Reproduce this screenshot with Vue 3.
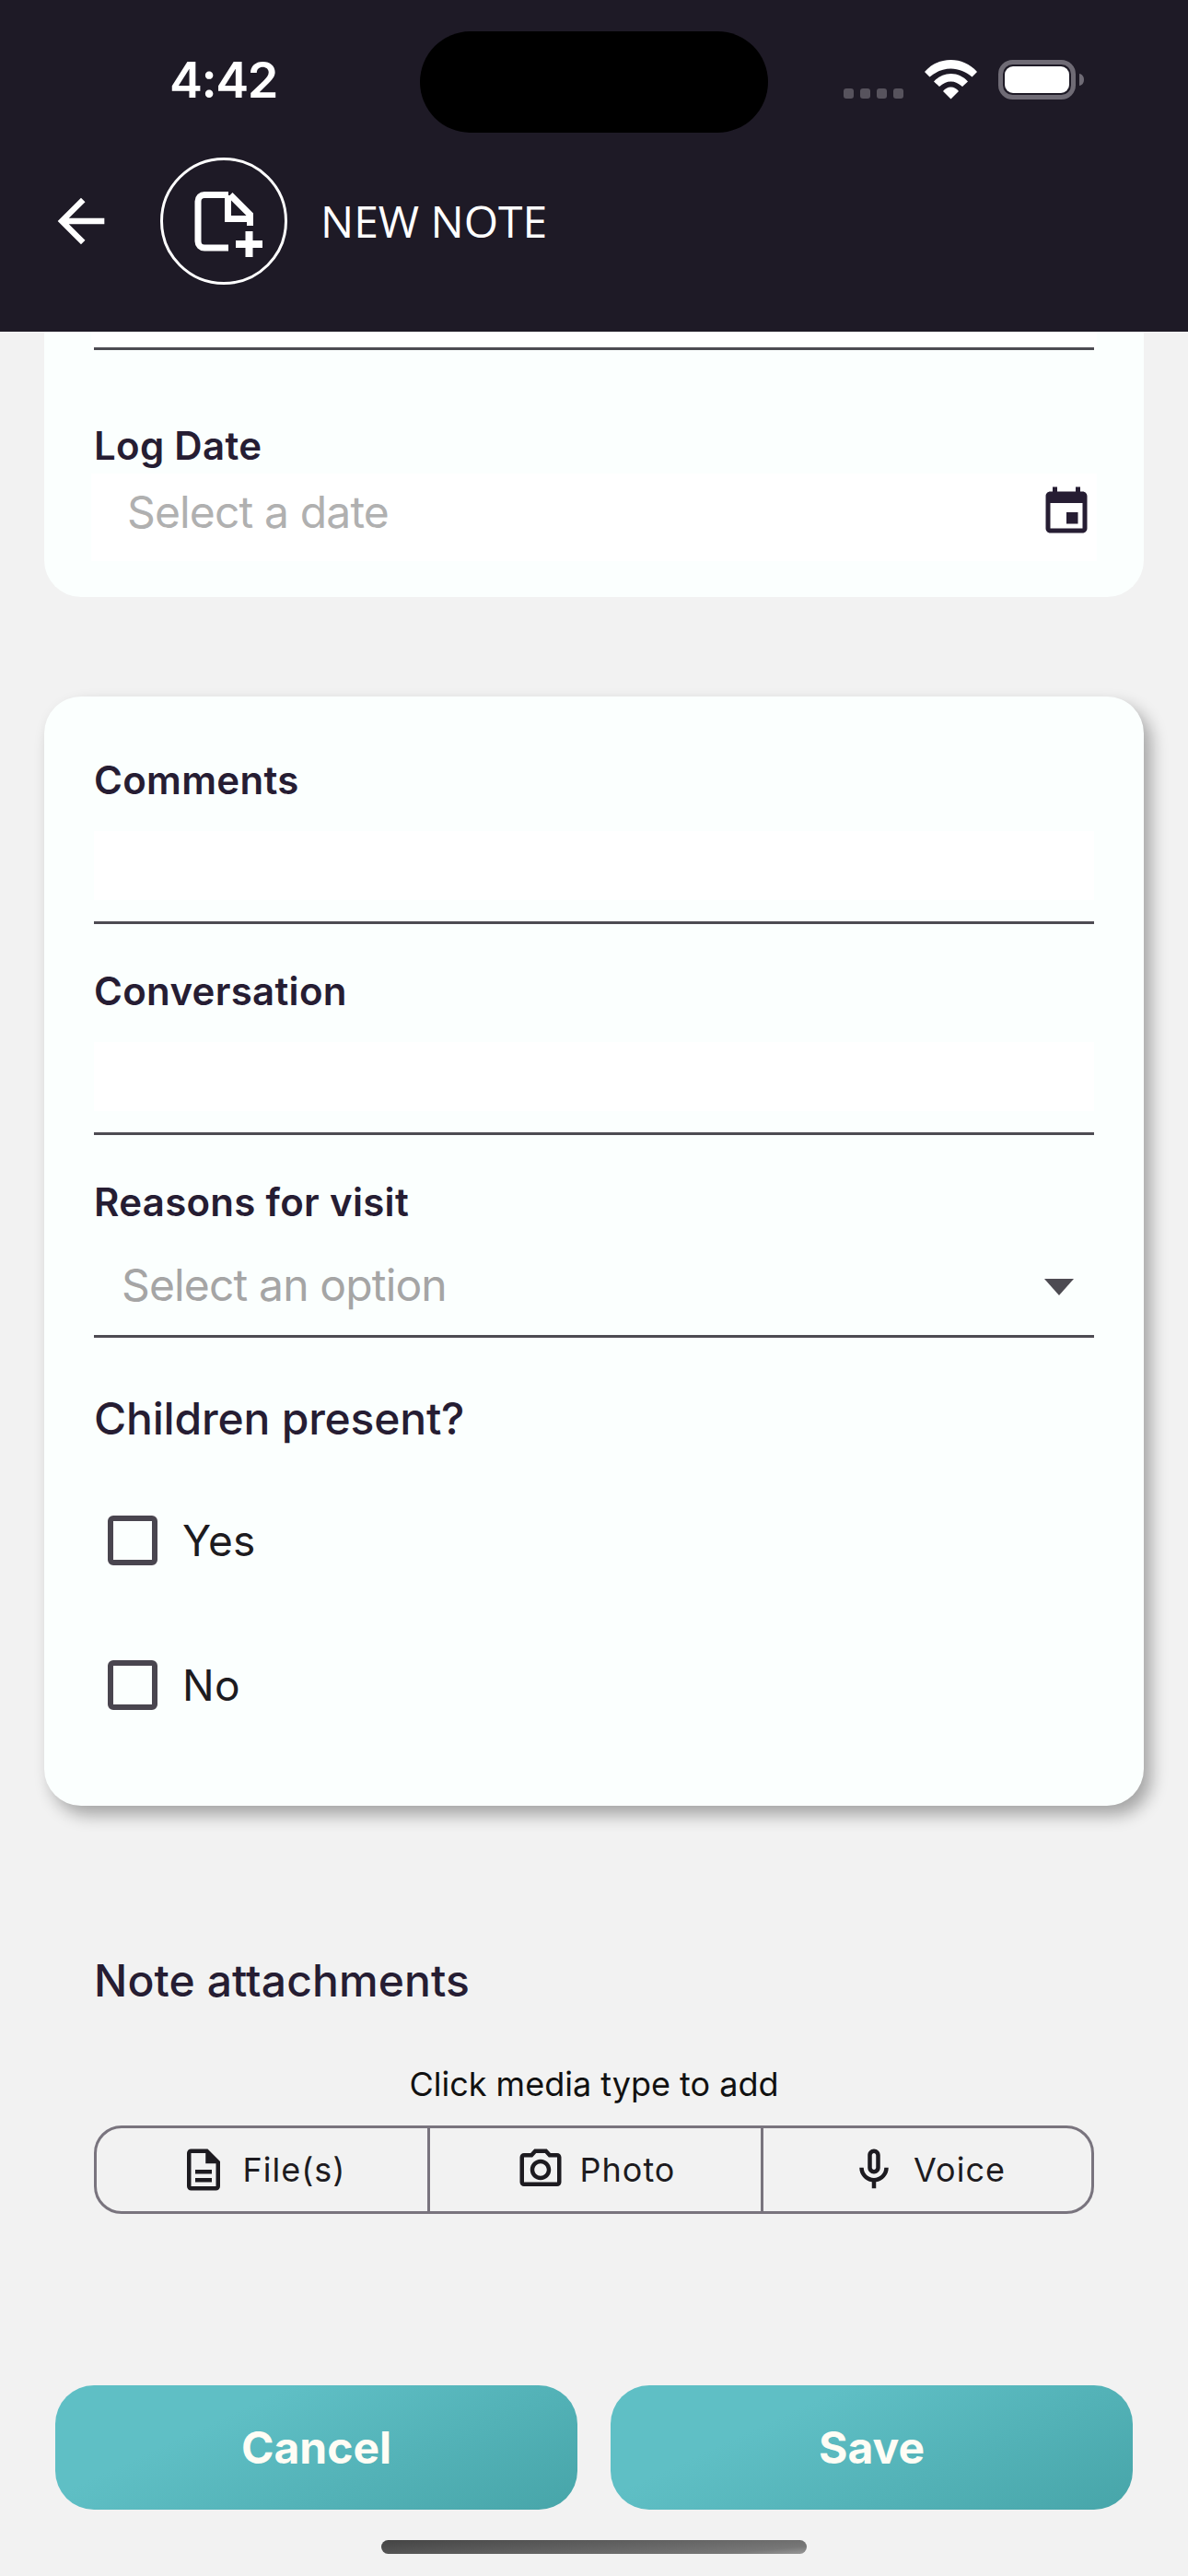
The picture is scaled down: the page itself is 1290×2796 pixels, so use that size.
<script setup>
const media = [
  { label: 'File(s)', d: 'M8 16h8v2H8zm0-4h8v2H8zm6-10H6c-1.1 0-2 .9-2 2v16c0 1.1.89 2 2 2h12c1.1 0 2-.9 2-2V8l-6-6zm4 18H6V4h7v5h5v11z' },
  { label: 'Photo', d: 'M20 4h-3.17L15 2H9L7.17 4H4c-1.1 0-2 .9-2 2v12c0 1.1.9 2 2 2h16c1.1 0 2-.9 2-2V6c0-1.1-.9-2-2-2zm0 14H4V6h4.05l1.83-2h4.24l1.83 2H20v12zM12 7c-2.76 0-5 2.24-5 5s2.24 5 5 5 5-2.24 5-5-2.24-5-5-5zm0 8c-1.65 0-3-1.35-3-3s1.35-3 3-3 3 1.35 3 3-1.35 3-3 3z' },
  { label: 'Voice', d: 'M12 14c1.66 0 3-1.34 3-3V5c0-1.66-1.34-3-3-3S9 3.34 9 5v6c0 1.66 1.34 3 3 3zm-1-9c0-.55.45-1 1-1s1 .45 1 1v6c0 .55-.45 1-1 1s-1-.45-1-1V5zm6 6c0 2.76-2.24 5-5 5s-5-2.24-5-5H5c0 3.53 2.61 6.43 6 6.92V21h2v-3.08c3.39-.49 6-3.39 6-6.92h-2z' },
]
const textFields = ['Comments', 'Conversation']
const choices = ['Yes', 'No']
</script>

<template>
  <div class="screen">
    <header class="topbar">
      <div class="status">
        <span class="time">4:42</span>
        <div class="island"></div>
        <div class="signal"><i></i><i></i><i></i><i></i></div>
        <svg class="wifi" width="57" height="43" viewBox="0 0 57 43" fill="#fff">
          <path d="M0 13C8 4 18 0 28.5 0S49 4 57 13l-5.500 5.500C45 13 37 9.500 28.500 9.500S12 13 5.500 18.500z" />
          <path d="M10 23.500C15 18 21 15 28.500 15S42 18 47 23.500L41 29c-4-3.500-8-5.500-12.500-5.500S20 25.500 16 29z" />
          <path d="M20 34c2.500-3 5-4.500 8.500-4.500S34.500 31 37 34l-8.500 8.500z" />
        </svg>
        <svg class="battery" width="94" height="43" viewBox="0 0 94 43">
          <rect x="2.500" y="2.500" width="79" height="38" rx="13" fill="none" stroke="#6f6b75" stroke-width="5" />
          <rect x="7" y="7" width="70" height="29" rx="9" fill="#fff" />
          <path d="M88 15c3 .5 5 3 5 6.500S91 27.500 88 28z" fill="#6f6b75" />
        </svg>
      </div>
      <div class="navrow">
        <svg class="back" width="76" height="76" viewBox="0 0 24 24" fill="#fff">
          <path d="M20 11H7.830l5.590-5.590L12 4l-8 8 8 8 1.410-1.410L7.830 13H20v-2z" />
        </svg>
        <div class="avatar">
          <svg width="132" height="132" viewBox="0 0 132 132" fill="none" stroke="#fff" stroke-width="7">
            <path d="M71 37.500H45a7 7 0 0 0-7 7V88a7 7 0 0 0 7 7h26" />
            <path d="M73 37.500 94.500 59v12M70.500 38v25.500H94" />
            <path d="M79 91h29M93.500 77v28" stroke-width="8" />
          </svg>
        </div>
        <span class="title">NEW NOTE</span>
      </div>
    </header>

    <main class="content">
      <section class="card card-top">
        <div class="cut-field"><div class="cut-line"></div></div>
        <label class="field-label log-label">Log Date</label>
        <div class="date-field">
          <span class="date-hint">Select a date</span>
          <svg width="60" height="60" viewBox="0 0 24 24" fill="#261d33">
            <path d="M17 12h-5v5h5v-5zM16 1v2H8V1H6v2H5c-1.110 0-1.990.9-1.990 2L3 19c0 1.100.89 2 2 2h14c1.100 0 2-.9 2-2V5c0-1.100-.9-2-2-2h-1V1h-2zm3 18H5V8h14v11z" />
          </svg>
        </div>
      </section>

      <section class="card card-form">
        <div v-for="name in textFields" :key="name" class="text-block">
          <label class="field-label">{{ name }}</label>
          <div class="text-field"><div class="text-input"></div></div>
        </div>
        <label class="field-label">Reasons for visit</label>
        <div class="select-field">
          <span class="select-hint">Select an option</span>
          <span class="caret"></span>
        </div>
        <h3 class="group-title">Children present?</h3>
        <div class="choices">
          <div v-for="c in choices" :key="c" class="choice">
            <span class="box"></span>
            <span class="choice-text">{{ c }}</span>
          </div>
        </div>
      </section>

      <section class="attachments">
        <h3 class="attach-title">Note attachments</h3>
        <p class="hint">Click media type to add</p>
        <div class="segments">
          <button v-for="m in media" :key="m.label" class="segment">
            <svg width="54" height="54" viewBox="0 0 24 24" fill="#1d1b20"><path :d="m.d" /></svg>
            <span>{{ m.label }}</span>
          </button>
        </div>
      </section>
    </main>

    <footer class="actions">
      <button class="action">Cancel</button>
      <button class="action">Save</button>
    </footer>
    <div class="home-bar"></div>
  </div>
</template>

<style>
html, body { margin: 0; background: #f2f2f2; }
</style>

<style scoped>
.screen {
  position: relative;
  width: 1290px;
  height: 2796px;
  overflow: hidden;
  display: flex;
  flex-direction: column;
  background: #f2f2f2;
  font-family: Inter, "Liberation Sans", sans-serif;
  color: #261d33;
}

/* header */
.topbar {
  height: 360px;
  flex: none;
  background: #1e1a26;
  display: flex;
  flex-direction: column;
}
.status {
  position: relative;
  height: 171px;
  display: flex;
  align-items: flex-start;
}
.time {
  margin: 53px 0 0 184px;
  font-size: 54px;
  line-height: 68px;
  font-weight: 600;
  letter-spacing: -1.5px;
  color: #fff;
}
.island {
  position: absolute;
  left: 456px;
  top: 34px;
  width: 378px;
  height: 110px;
  border-radius: 55px;
  background: #000;
}
.signal {
  position: absolute;
  left: 916px;
  top: 96px;
  display: flex;
  gap: 7px;
}
.signal i {
  width: 11px;
  height: 11px;
  border-radius: 3px;
  background: #57535d;
}
.wifi { position: absolute; left: 1004px; top: 65px; }
.battery { position: absolute; left: 1084px; top: 65px; }

.navrow {
  display: flex;
  align-items: center;
  height: 138px;
  padding-left: 50px;
}
.avatar {
  width: 138px;
  height: 138px;
  box-sizing: border-box;
  margin-left: 48px;
  border: 3px solid #fff;
  border-radius: 50%;
}
.avatar svg { display: block; }
.title {
  margin-left: 36px;
  font-family: "Open Sans", sans-serif;
  font-size: 48px;
  line-height: 60px;
  color: #fff;
}

/* cards */
.content {
  flex: 1;
  padding: 0 48px;
}
.card {
  background: #fbfffe;
  padding: 0 54px;
  box-sizing: border-box;
}
.card-top {
  height: 288px;
  border-radius: 0 0 40px 40px;
}
.cut-field {
  height: 20px;
  margin: 0 -3px;
  padding: 0 3px;
  background: #fff;
}
.cut-line {
  height: 20px;
  box-sizing: border-box;
  border-bottom: 3px solid #4d4b52;
}
.field-label {
  display: block;
  font-size: 42px;
  line-height: 50px;
  font-weight: 600;
  letter-spacing: 0.3px;
}
.log-label { margin-top: 79px; }
.date-field {
  height: 95px;
  margin: 5px -3px 0;
  padding: 0 3px 12px 39px;
  box-sizing: border-box;
  background: #fff;
  display: flex;
  align-items: center;
  justify-content: space-between;
}
.date-hint {
  font-size: 48px;
  letter-spacing: -0.85px;
  color: #b0b0b0;
}

.card-form {
  height: 1204px;
  margin-top: 108px;
  padding-top: 66px;
  border-radius: 40px;
  box-shadow: 8px 10px 18px rgba(0, 0, 0, 0.32);
}
.text-block { margin-bottom: 48px; }
.text-field {
  height: 131px;
  padding-top: 30px;
  box-sizing: border-box;
  border-bottom: 3px solid #4d4b52;
}
.text-input {
  height: 75px;
  background: #fff;
}
.select-field {
  height: 122px;
  padding: 10px 22px 0 30px;
  box-sizing: border-box;
  border-bottom: 3px solid #4d4b52;
  display: flex;
  align-items: center;
  justify-content: space-between;
}
.select-hint {
  font-size: 48px;
  letter-spacing: -0.85px;
  color: #a5a5a5;
}
.caret {
  width: 0;
  height: 0;
  margin-top: 5px;
  border-left: 16px solid transparent;
  border-right: 16px solid transparent;
  border-top: 18px solid #4d4b52;
}
.group-title {
  margin: 58px 0 0;
  font-size: 48px;
  line-height: 60px;
  font-weight: 500;
  letter-spacing: -0.2px;
}
.choices { margin-top: 23px; }
.choice {
  display: flex;
  align-items: center;
  height: 157px;
  padding-left: 15px;
}
.box {
  width: 54px;
  height: 54px;
  box-sizing: border-box;
  border: 6px solid #49454f;
  border-radius: 6px;
}
.choice-text {
  margin-left: 27px;
  font-size: 46px;
  letter-spacing: 0.3px;
  color: #1d1b20;
}

/* attachments */
.attachments { padding: 160px 54px 0; }
.attach-title {
  margin: 0;
  font-size: 48px;
  line-height: 60px;
  font-weight: 500;
  letter-spacing: 0.1px;
}
.hint {
  margin: 57px 0 0;
  text-align: center;
  font-size: 36px;
  line-height: 50px;
  color: #111;
}
.segments {
  display: grid;
  grid-template-columns: 359px 362px 1fr;
  height: 96px;
  margin-top: 20px;
  box-sizing: border-box;
  border: 3px solid #79747e;
  border-radius: 30px;
  overflow: hidden;
}
.segment {
  display: flex;
  align-items: center;
  justify-content: center;
  gap: 16px;
  padding: 0;
  border: 0;
  background: none;
  font-family: inherit;
  font-size: 36px;
  letter-spacing: 1px;
  color: #1d1b20;
}
.segment + .segment { border-left: 3px solid #79747e; }

/* bottom buttons */
.actions {
  flex: none;
  display: flex;
  gap: 36px;
  padding: 0 60px;
  margin-bottom: 72px;
}
.action {
  flex: 1;
  height: 135px;
  border: 0;
  border-radius: 42px;
  background: linear-gradient(155deg, #5fbfc5 30%, #47a5a9 100%);
  font-family: inherit;
  font-size: 48px;
  font-weight: 700;
  color: #fffdf5;
}
.home-bar {
  position: absolute;
  left: 414px;
  top: 2757px;
  width: 462px;
  height: 15px;
  border-radius: 8px;
  background: linear-gradient(175deg, #444 0%, #777 85%, #999 100%);
}
</style>
